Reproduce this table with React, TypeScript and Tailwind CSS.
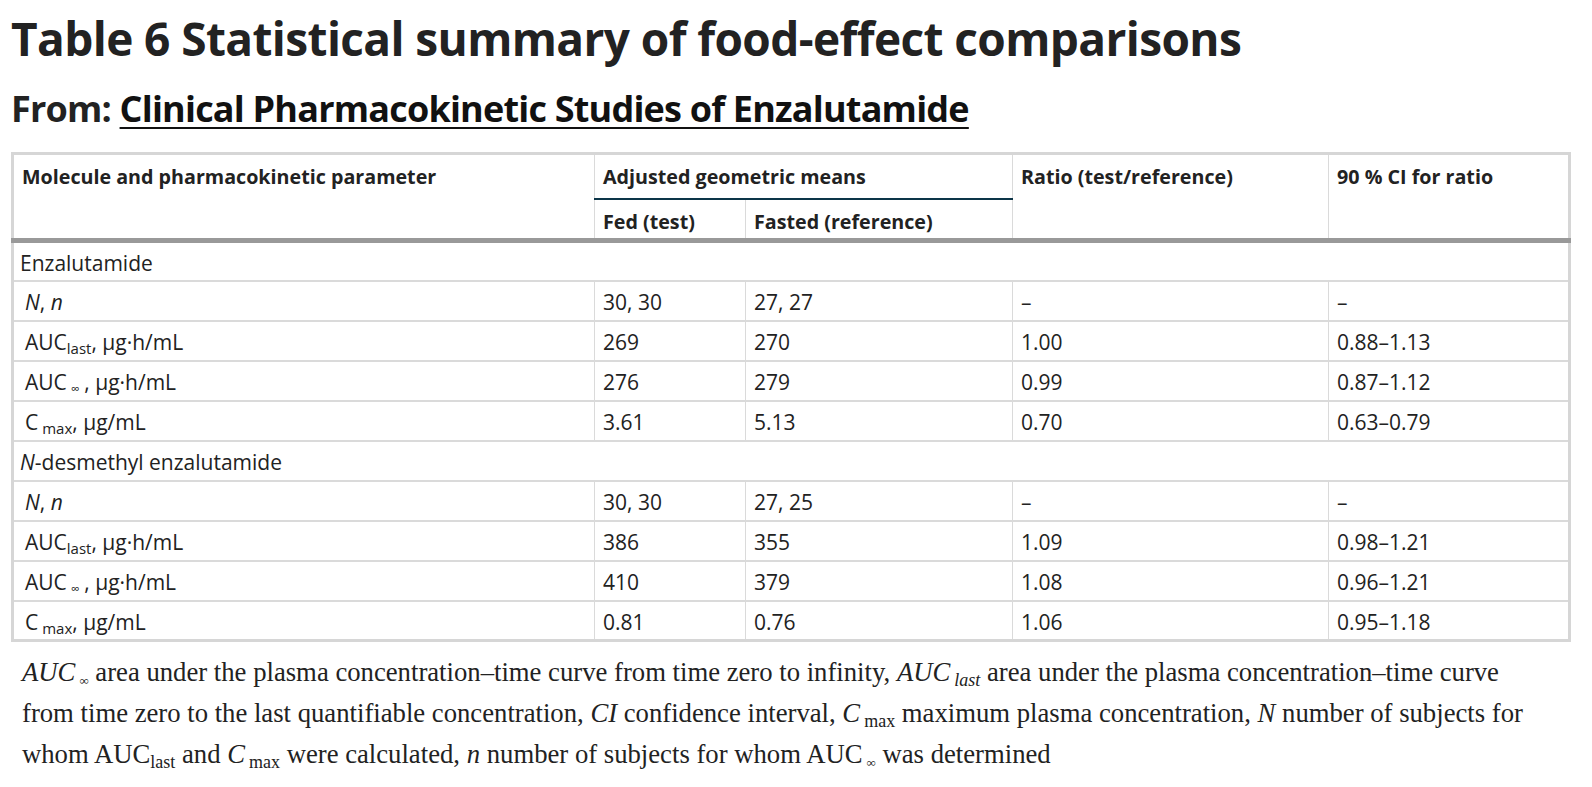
import React from "react"

type Row = {
  label: React.ReactNode
  fed: string
  fasted: string
  ratio: string
  ci: string
}

const aucLast = (
  <>
    AUC<sub className="text-[15px]">last</sub>, µg·h/mL
  </>
)
const aucInf = (
  <>
    AUC<sub className="ml-[4px] mr-[5px] text-[12px]">∞</sub>, µg·h/mL
  </>
)
const cMax = (
  <>
    C<sub className="ml-[4px] text-[15px]">max</sub>, µg/mL
  </>
)
const nn = (
  <>
    <i>N</i>, <i>n</i>
  </>
)

const groups: { name: React.ReactNode; rows: Row[] }[] = [
  {
    name: "Enzalutamide",
    rows: [
      { label: nn, fed: "30, 30", fasted: "27, 27", ratio: "–", ci: "–" },
      { label: aucLast, fed: "269", fasted: "270", ratio: "1.00", ci: "0.88–1.13" },
      { label: aucInf, fed: "276", fasted: "279", ratio: "0.99", ci: "0.87–1.12" },
      { label: cMax, fed: "3.61", fasted: "5.13", ratio: "0.70", ci: "0.63–0.79" },
    ],
  },
  {
    name: (
      <>
        <i>N</i>-desmethyl enzalutamide
      </>
    ),
    rows: [
      { label: nn, fed: "30, 30", fasted: "27, 25", ratio: "–", ci: "–" },
      { label: aucLast, fed: "386", fasted: "355", ratio: "1.09", ci: "0.98–1.21" },
      { label: aucInf, fed: "410", fasted: "379", ratio: "1.08", ci: "0.96–1.21" },
      { label: cMax, fed: "0.81", fasted: "0.76", ratio: "1.06", ci: "0.95–1.18" },
    ],
  },
]

const th = "align-top text-left font-bold px-[8px] pt-[8px] border-r border-[#dadada]"
const td = "align-top px-[8px] pt-[6px] border-r border-[#dadada]"

export default function App() {
  return (
    <div className="min-h-screen bg-white pl-[11px] pr-[21px] text-[#222]" style={{ fontFamily: '"Open Sans", sans-serif' }}>
      <h1 className="pt-[11px] text-[46px] font-bold leading-[1.2] tracking-[-0.6px]">
        Table 6 Statistical summary of food-effect comparisons
      </h1>
      <h2 className="mt-[21px] text-[36px] font-bold leading-[1.2] tracking-[-0.8px]">
        From:{" "}
        <a href="#" className="text-[#111] underline decoration-[1.5px] underline-offset-[5px]">
          Clinical Pharmacokinetic Studies of Enzalutamide
        </a>
      </h2>

      <table className="mt-[22px] w-full table-fixed border-collapse border-[3px] border-[#d6d6d6] text-[21px] leading-[28px] text-[#222]">
        <colgroup>
          <col className="w-[582px]" />
          <col className="w-[151px]" />
          <col className="w-[267px]" />
          <col className="w-[316px]" />
          <col />
        </colgroup>
        <thead className="text-[19.7px]">
          <tr className="h-[45px]">
            <th rowSpan={2} className={th}>
              Molecule and pharmacokinetic parameter
            </th>
            <th colSpan={2} className={`${th} border-b-2 border-b-[#0c3548]`}>
              Adjusted geometric means
            </th>
            <th rowSpan={2} className={th}>
              Ratio (test/reference)
            </th>
            <th rowSpan={2} className={th}>
              90 % CI for ratio
            </th>
          </tr>
          <tr className="h-[42px] border-b-[5px] border-[#999]">
            <th className={th}>Fed (test)</th>
            <th className={th}>Fasted (reference)</th>
          </tr>
        </thead>
        <tbody>
          {groups.map((g, gi) => (
            <React.Fragment key={gi}>
              <tr className="h-[40px] border-b-2 border-[#dadada]">
                <td colSpan={5} className="align-top px-[6px] pt-[6px]">
                  {g.name}
                </td>
              </tr>
              {g.rows.map((r, ri) => (
                <tr key={ri} className="h-[40px] border-b-2 border-[#dadada]">
                  <td className={`${td} pl-[11px]`}>{r.label}</td>
                  <td className={td}>{r.fed}</td>
                  <td className={td}>{r.fasted}</td>
                  <td className={td}>{r.ratio}</td>
                  <td className={td}>{r.ci}</td>
                </tr>
              ))}
            </React.Fragment>
          ))}
        </tbody>
      </table>

      <p
        className="mr-[20px] mt-[10px] pl-[11px] text-[26.7px] leading-[41px] text-[#222]"
        style={{ fontFamily: '"Liberation Serif", serif' }}
      >
        <i>AUC</i>
        <sub className="ml-[4px] text-[13px]">∞</sub> area under the plasma concentration–time curve from time zero to
        infinity, <i>AUC</i>
        <sub className="ml-[4px] text-[18px] italic">last</sub> area under the plasma concentration–time curve from time
        zero to the last quantifiable concentration, <i>CI</i> confidence interval, <i>C</i>
        <sub className="ml-[4px] text-[18px]">max</sub> maximum plasma concentration, <i>N</i> number of subjects for
        whom AUC<sub className="text-[18px]">last</sub> and <i>C</i>
        <sub className="ml-[4px] text-[18px]">max</sub> were calculated, <i>n</i> number of subjects for whom AUC
        <sub className="ml-[4px] text-[13px]">∞</sub> was determined
      </p>
    </div>
  )
}
